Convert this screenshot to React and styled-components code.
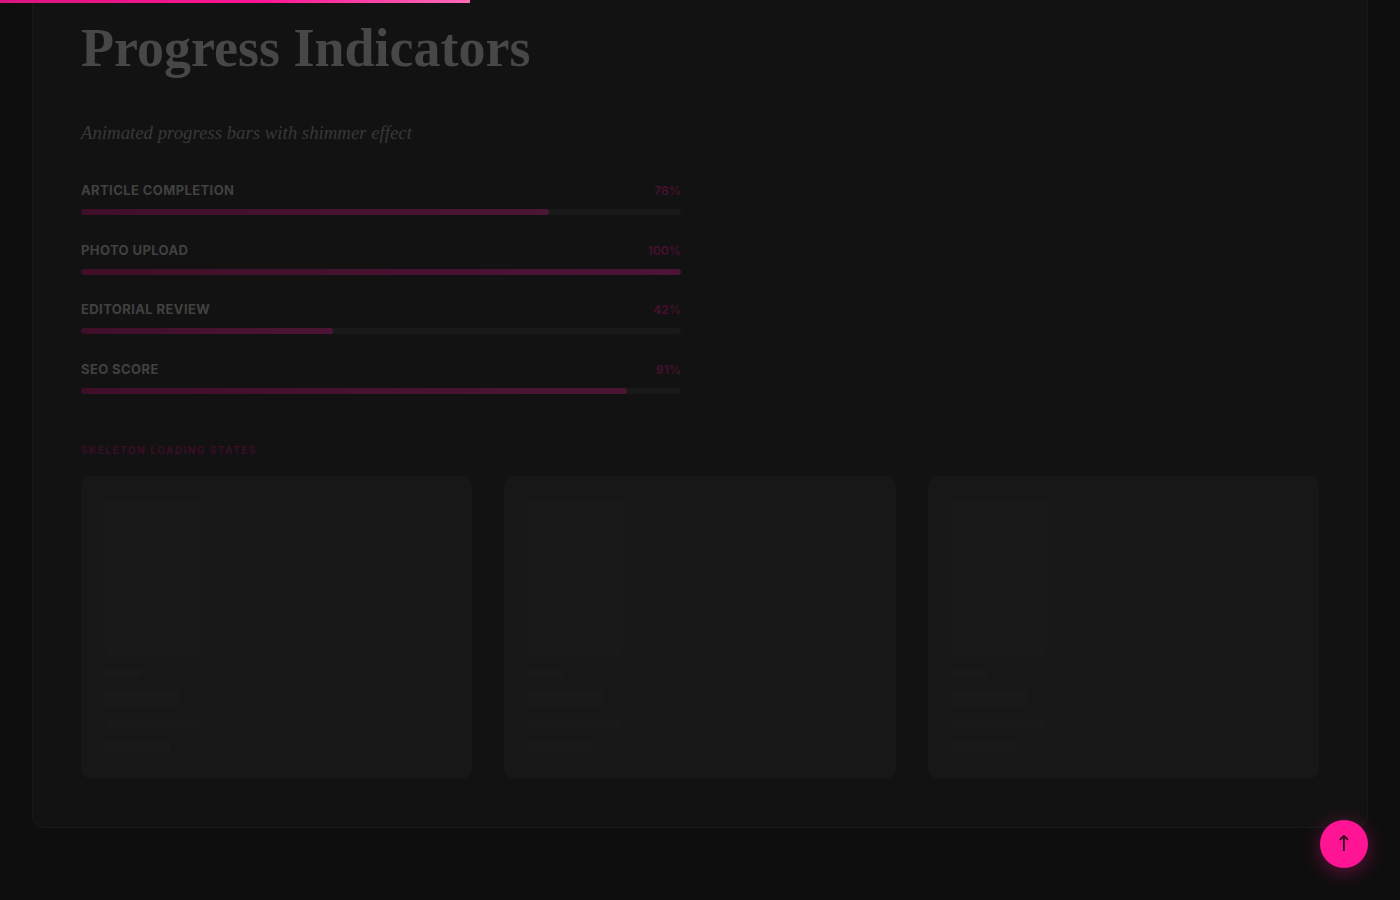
import React from 'react';
import styled, { createGlobalStyle } from 'styled-components';

const GlobalStyle = createGlobalStyle`
  html, body {
    margin: 0;
    padding: 0;
    background-color: #0e0e0e;
    overflow: hidden;
  }
  body {
    font-family: 'Inter', 'Liberation Sans', sans-serif;
  }
`;

const progressItems = [
  { label: 'Article Completion', value: 78 },
  { label: 'Photo Upload', value: 100 },
  { label: 'Editorial Review', value: 42 },
  { label: 'SEO Score', value: 91 },
];

export default function App() {
  return (
    <>
      <GlobalStyle />
      <ReadingBar style={{ width: '33.6%' }} />
      <Page>
        <Section>
          <Title>Progress Indicators</Title>
          <Divider />
          <Subtitle>Animated progress bars with shimmer effect</Subtitle>

          <ProgressList>
            {progressItems.map((item) => (
              <ProgressItem key={item.label}>
                <ProgressHead>
                  <ProgressLabel>{item.label}</ProgressLabel>
                  <ProgressValue>{item.value}%</ProgressValue>
                </ProgressHead>
                <Track>
                  <Fill style={{ width: `${item.value}%` }} />
                </Track>
              </ProgressItem>
            ))}
          </ProgressList>

          <SmallHeading>Skeleton Loading States</SmallHeading>
          <CardGrid>
            {[0, 1, 2].map((i) => (
              <SkeletonCard key={i}>
                <SkeletonImage />
                <SkeletonLine w={37} h={9} />
                <SkeletonLine w={75} h={17} />
                <SkeletonLine w={95} h={10} />
                <SkeletonLine w={65} h={12} />
              </SkeletonCard>
            ))}
          </CardGrid>
        </Section>
      </Page>
      <BackToTop aria-label="Back to top">↑</BackToTop>
    </>
  );
}

const ReadingBar = styled.div`
  position: fixed;
  top: 0;
  left: 0;
  height: 3px;
  background: linear-gradient(90deg, #d8157f 0%, #ff1493 55%, #ff6ab8 100%);
  z-index: 10;
`;

const Page = styled.div`
  padding: 0 32px 72px 32px;
  margin-top: -36px;
`;

const Section = styled.section`
  background-color: #121212;
  border: 1px solid #181818;
  border-radius: 12px;
  padding: 0 48px 48px 48px;
`;

const Title = styled.h2`
  margin: 0;
  font-family: 'Liberation Serif', serif;
  font-weight: 700;
  font-size: 54px;
  line-height: 68px;
  color: #474747;
  padding-bottom: 10px;
  padding-top: 49px;
`;

const Divider = styled.hr`
  margin: 0;
  border: 0;
  height: 1px;
  background-color: #1c1216;
`;

const Subtitle = styled.p`
  margin: 28px 0 0 0;
  font-family: 'Liberation Serif', serif;
  font-style: italic;
  font-size: 18.8px;
  line-height: 24px;
  color: #383838;
`;

const ProgressList = styled.div`
  width: 600px;
  margin-top: 37px;
  display: flex;
  flex-direction: column;
  gap: 26.7px;
`;

const ProgressItem = styled.div`
  display: flex;
  flex-direction: column;
  gap: 10px;
`;

const ProgressHead = styled.div`
  display: flex;
  justify-content: space-between;
  align-items: baseline;
`;

const ProgressLabel = styled.span`
  font-family: 'Inter', sans-serif;
  font-weight: 700;
  font-size: 13px;
  line-height: 16px;
  letter-spacing: 0.4px;
  text-transform: uppercase;
  color: #414141;
`;

const ProgressValue = styled.span`
  font-family: 'Inter', sans-serif;
  font-weight: 700;
  font-size: 12px;
  line-height: 16px;
  color: #42102c;
`;

const Track = styled.div`
  height: 6px;
  border-radius: 3px;
  background-color: #191919;
  overflow: hidden;
`;

const Fill = styled.div`
  height: 100%;
  border-radius: 3px;
  background: linear-gradient(90deg, #3f0f29 0%, #4c1535 100%);
`;

const SmallHeading = styled.h3`
  margin: 49px 0 0 0;
  font-family: 'Inter', sans-serif;
  font-weight: 700;
  font-size: 10px;
  line-height: 14px;
  letter-spacing: 1.5px;
  text-transform: uppercase;
  color: #3a0e24;
`;

const CardGrid = styled.div`
  margin-top: 19px;
  display: grid;
  grid-template-columns: repeat(3, 1fr);
  gap: 32px;
`;

const SkeletonCard = styled.div`
  background-color: #171717;
  border-radius: 10px;
  padding: 24px;
  height: 303px;
  box-sizing: border-box;
  display: flex;
  flex-direction: column;
  align-items: flex-start;
  gap: 12px;
`;

const SkeletonImage = styled.div`
  width: 95px;
  height: 157px;
  border-radius: 6px;
  background-color: #191919;
`;

const SkeletonLine = styled.div`
  width: ${(p) => p.w}px;
  height: ${(p) => p.h}px;
  border-radius: 3px;
  background-color: #191919;
`;

const BackToTop = styled.button`
  position: fixed;
  right: 32px;
  bottom: 32px;
  width: 48px;
  height: 48px;
  border-radius: 50%;
  border: 0;
  background-color: #ff1493;
  color: #2a0a1a;
  font-family: 'DejaVu Sans', sans-serif;
  font-size: 22px;
  line-height: 48px;
  padding: 0;
  box-shadow: 0 4px 20px rgba(255, 20, 147, 0.35);
  cursor: pointer;
`;
